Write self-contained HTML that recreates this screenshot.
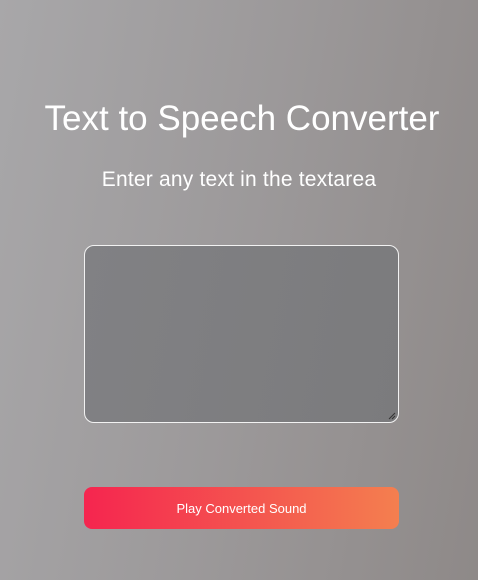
<!DOCTYPE html>
<html><head><style>
html,body{margin:0;padding:0;width:478px;height:580px;overflow:hidden}
body{background:linear-gradient(100deg,#a8a7a9 0%,#9c999a 50%,#8e8988 100%);font-family:"Liberation Sans",sans-serif;color:#fff;position:relative}
h1{position:absolute;left:0;right:0;top:98px;margin:0;text-align:center;font-weight:400;font-size:35px;line-height:42px;padding-left:6px}
h2{position:absolute;left:0;right:0;top:168px;margin:0;text-align:center;font-weight:400;font-size:21px;line-height:24px;letter-spacing:0.2px}
.ta{position:absolute;left:84px;top:245px;width:313px;height:176px;border:1px solid #f2f2f2;border-radius:10px;background:linear-gradient(100deg,#818184,#7b7b7d)}
.ta svg{position:absolute;right:2px;bottom:2px}
.btn{position:absolute;left:84px;top:487px;width:315px;height:42px;border-radius:8px;background:linear-gradient(90deg,#f5254f,#f47f4f);text-align:center;line-height:43px;font-size:13px;color:#fff}
</style></head><body>
<h1>Text to Speech Converter</h1>
<h2>Enter any text in the textarea</h2>
<div class="ta"><svg width="8" height="8"><path d="M1 7L7 1M4 7L7 4" stroke="#333" stroke-width="1"/></svg></div>
<div class="btn">Play Converted Sound</div>
</body></html>
